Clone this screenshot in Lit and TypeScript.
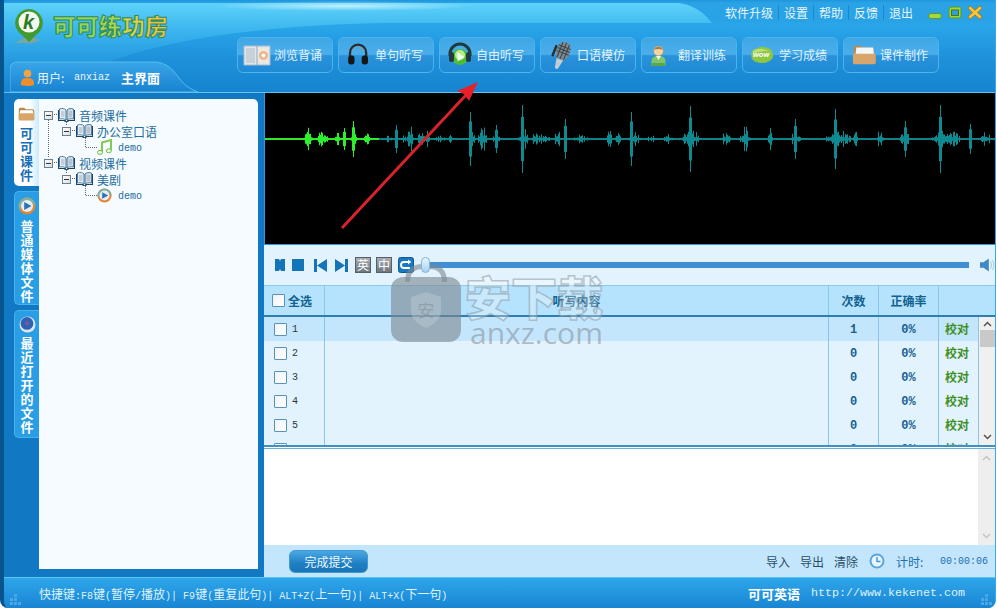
import { LitElement, html, css, svg } from "lit";
import { customElement } from "lit/decorators.js";

function seeded(s: number) {
  return () => {
    s = (s * 16807) % 2147483647;
    return s / 2147483647;
  };
}

// [centre x, amplitude, half width] in page coordinates
const CLUSTERS: number[][] = [
  [308, 14, 4], [321, 9, 4], [326, 6, 3], [337, 12, 2], [344, 11, 1], [353, 18, 1], [354, 8, 4], [367, 6, 4],
  [388, 4, 3], [396, 14, 1], [403, 5, 2], [410, 15, 3], [421, 9, 3], [427, 12, 2], [439, 6, 5], [450, 4, 1],
  [470, 27, 1], [472, 10, 3], [482, 16, 4], [496, 14, 1], [496, 5, 4], [522, 34, 1], [523, 14, 5], [535, 11, 3],
  [544, 8, 5], [557, 14, 2], [565, 20, 1], [580, 5, 7], [609, 23, 2], [618, 7, 3], [631, 27, 1], [634, 9, 6],
  [652, 4, 7], [668, 6, 4], [690, 33, 1], [690, 12, 9], [725, 8, 5], [745, 22, 2], [745, 8, 7], [770, 15, 2],
  [795, 20, 1], [795, 9, 6], [835, 30, 1], [838, 12, 12], [855, 15, 2], [880, 14, 3], [905, 18, 1], [905, 8, 5],
  [940, 34, 1], [945, 14, 14], [970, 15, 1], [985, 10, 4],
];

const BARS = (() => {
  const r = seeded(4711);
  const peak = new Map<number, number>();
  for (const [cx, amp, hw] of CLUSTERS) {
    for (let x = cx - hw; x <= cx + hw; x++) {
      const fall = 1 - (Math.abs(x - cx) / (hw + 1)) * 0.7;
      const q = r();
      const a = amp * fall * (hw <= 1 ? 1 : 0.2 + q * q * 0.8);
      peak.set(x, Math.max(peak.get(x) ?? 0, a));
    }
  }
  return [...peak.entries()];
})();

const ROWS = [
  { n: 1, c: 1 }, { n: 2, c: 0 }, { n: 3, c: 0 }, { n: 4, c: 0 }, { n: 5, c: 0 }, { n: 6, c: 0 },
];

const book = html`<svg class="tico" width="17" height="14" viewBox="0 0 17 14">
  <path d="M0 2h1v10h6.500l1 1.500 1-1.500H16V2h1v11h-6l-1 1H7l-1-1H0z" fill="#1c4468"/>
  <path d="M1.500 1C4 0 6.500 .5 8 2v10C6.500 10.800 4 10.500 1.500 11z" fill="#e6edf2" stroke="#2e6288" stroke-width=".8"/>
  <path d="M15.500 1C13 0 10.500 .5 9 2v10c1.500-1.200 4-1.500 6.500-1z" fill="#cfdbe4" stroke="#2e6288" stroke-width=".8"/>
  <path d="M3 4h3.500M3 6h3.500M3 8h3.500M10.500 4H14M10.500 6H14M10.500 8H14" stroke="#8aa2b6" stroke-width=".8"/>
</svg>`;

const minus = html`<span class="ex"></span>`;

const music = html`<svg class="tico" width="15" height="16" viewBox="0 0 15 16">
  <path d="M5 3.500 14 1v10.500" fill="none" stroke="#86c858" stroke-width="2"/>
  <path d="M5 2.800V13" stroke="#86c858" stroke-width="2"/>
  <ellipse cx="3" cy="13.400" rx="2.600" ry="2" fill="#e9f7dc" stroke="#78bd4a"/>
  <ellipse cx="11.800" cy="11.800" rx="2.600" ry="2" fill="#e9f7dc" stroke="#78bd4a"/>
</svg>`;

const media = (size: number) => html`<svg class="tico" width="${size}" height="${size}" viewBox="0 0 16 16">
  <circle cx="8" cy="8" r="7.500" fill="#e8842c"/>
  <path d="M8 .5A7.500 7.500 0 0 0 1.500 11.700 8 8 0 0 1 15.500 8 7.500 7.500 0 0 0 8 .5z" fill="#7fb0a0"/>
  <circle cx="8" cy="8" r="5.400" fill="#e6eef4"/>
  <path d="M5.500 4.500 12 8 5.500 11.500z" fill="#2c74b8"/>
</svg>`;

const folder = (w: number, h: number) => html`<svg width="${w}" height="${h}" viewBox="0 0 22 18">
  <path d="M1 3q0-2 2-2h5l2 2h9q2 0 2 2v11q0 1-1 1H2q-1 0-1-1z" fill="#b88a52"/>
  <path d="M3 4h16l1 5H2z" fill="#fff"/>
  <path d="M1 8h20v8q0 1-1 1H2q-1 0-1-1z" fill="#d9a468"/>
</svg>`;

const grip = svg`<g fill="#4aa8e4">
  <rect x="4" y="0" width="3" height="3"/><rect x="0" y="4" width="3" height="3"/><rect x="4" y="4" width="3" height="3"/>
  <rect x="0" y="8" width="3" height="3"/><rect x="4" y="8" width="3" height="3"/><rect x="8" y="8" width="3" height="3"/>
</g>`;

const NAV = [
  { t: "浏览背诵", i: svg`<path d="M1 5h26v19H1z" fill="#dfe6ec" stroke="#aebcc8"/><path d="M14 5v19" stroke="#9aa8b4"/><path d="M3 7h9v15H3z" fill="#c8d0d8"/><path d="M16 7h9v15h-9z" fill="#efe9df"/><circle cx="20.500" cy="14.500" r="4.500" fill="#eeb488"/><circle cx="20.500" cy="14.500" r="2" fill="#fff"/>` },
  { t: "单句听写", i: svg`<g transform="translate(1.500 1) scale(.9)"><path d="M5 16v-4a9 9 0 0 1 18 0v4" fill="none" stroke="#2b2b2b" stroke-width="2.500"/><rect x="3" y="15" width="7" height="10" rx="3" fill="#161616"/><rect x="18" y="15" width="7" height="10" rx="3" fill="#161616"/><path d="M7 9q7-6 14 0" fill="none" stroke="#8a97a0" stroke-width="1"/></g>` },
  { t: "自由听写", i: svg`<g transform="translate(1 1)"><path d="M4 14v-2a10 10 0 0 1 20 0v2" fill="none" stroke="#20393a" stroke-width="3"/><circle cx="14" cy="15" r="8" fill="#4dbb34"/><circle cx="14" cy="13" r="5" fill="#b7ec8c"/><path d="M11.500 10.500v9l7-4.500z" fill="#f2fff0"/><rect x="3" y="10" width="5" height="10" rx="2.500" fill="#23393f"/><rect x="20" y="10" width="5" height="10" rx="2.500" fill="#23393f"/></g>` },
  { t: "口语模仿", i: svg`<g transform="rotate(22 14 14) translate(1 0)"><rect x="8" y="0" width="13" height="18" rx="6" fill="#7e8890"/><path d="M8 5h13M8 8h13M8 11h13M11 1v16M14.500 0v18M18 1v16" stroke="#3a4248" stroke-width="1"/><path d="M11 18h7l-2 10h-3z" fill="#c4ccd2"/><rect x="5" y="6" width="2.500" height="12" rx="1" fill="#2a3036"/></g>` },
  { t: "翻译训练", i: svg`<g transform="translate(-2.500 0)"><circle cx="14" cy="10" r="5" fill="#f3d4a6" stroke="#a88858" stroke-width=".6"/><path d="M9 9q5-7 10 0-5-2-10 0z" fill="#a47c4a"/><path d="M7 25v-5q0-5 7-5t7 5v5z" fill="#7fc66e"/><path d="M11.500 15l2.500 4 2.500-4z" fill="#f6f6e8"/><rect x="7" y="22" width="14" height="3" rx="1.500" fill="#58a84a"/></g>` },
  { t: "学习成绩", i: svg`<g transform="translate(1.500 2) scale(.87)"><path d="M2 14q0-7 7-8 4-3 9-1 8 1 9 8 1 7-7 9-6 2-11 0-7-1-7-8z" fill="#8dc63f"/><path d="M4 9q9-5 20 1-10-2-20 2z" fill="#bde07a"/></g>`, wow: true },
  { t: "课件制作", i: svg`<g transform="translate(3 3) scale(.88)"><path d="M2 4q0-2 2-2h6l2 2h11q2 0 2 2v14H2z" fill="#b88a52"/><path d="M5 4h19l1 8H4z" fill="#f4f7f8"/><path d="M1 11h26v10q0 2-2 2H3q-2 0-2-2z" fill="#d8a66c"/></g>` },
];

@customElement("app-root")
export class AppRoot extends LitElement {
  static styles = css`
    :host { display: block; width: 998px; height: 608px; position: relative; overflow: hidden; background: #fff; font-family: "Noto Sans CJK SC", "Liberation Sans", sans-serif; font-size: 12px; }
    * { box-sizing: border-box; }
    .win { width: 996px; height: 608px; display: flex; flex-direction: column; background: #0f78c0; border-left: 4px solid #07558f; border-right: 1px solid #3aa8e4; border-radius: 0 0 8px 8px; overflow: hidden; }

    /* header */
    .header { height: 93px; flex: none; display: flex; position: relative; border-bottom: 1px solid #62c4f0; background: linear-gradient(#1f95dc 0, #2aa3e6 3px, #2aa2e6 22px, #29a6ea 24px, #1e90da 60px, #1684d0 100%); }
    .sheen { position: absolute; left: 0; top: 0; }
    .hleft { width: 233px; flex: none; display: flex; flex-direction: column; justify-content: space-between; position: relative; }
    .logo { display: flex; align-items: flex-start; padding: 8px 0 0 9px; gap: 8px; }
    .pin { position: relative; width: 32px; height: 36px; flex: none; }
    .pin svg { position: absolute; left: 0; top: 0; }
    .pin b { position: absolute; left: 10px; top: 2px; font: italic bold 20px "Liberation Sans", sans-serif; color: #2a7a28; line-height: 24px; }
    .brand { display: flex; font-size: 23px; font-weight: 900; line-height: 30px; margin-top: 2px; letter-spacing: 0; -webkit-text-stroke: 1px #2f8a5a; }
    .brand span:nth-child(1), .brand span:nth-child(2) { color: #8fd65a; }
    .brand span:nth-child(3) { color: #a9d84e; }
    .brand span:nth-child(4) { color: #d8d246; }
    .brand span:nth-child(5) { color: #eec13f; }
    .user { margin-left: 6px; width: 188px; height: 31px; position: relative; display: flex; align-items: center; gap: 3px; padding: 1px 0 0 11px; color: #e8f7ff; }
    .user > svg.bg { position: absolute; left: 0; top: 0; }
    .user > * { position: relative; }
    .user .mono { font-family: "Liberation Mono", monospace; font-size: 10px; }
    .user .main { font-weight: 700; font-size: 13px; color: #fff; margin-left: 8px; }
    .user .lab { font-size: 12px; min-width: 34px; }
    .hright { flex: 1; position: relative; display: flex; flex-direction: column; min-width: 0; }
    .links { display: flex; justify-content: flex-end; align-items: center; height: 24px; padding-right: 13px; color: #e6f6ff; font-size: 12px; }
    .links a { padding: 0 5px; border-left: 1px solid #1c86cc; line-height: 15px; }
    .links a:first-child { border-left: none; }
    .win-btns { display: flex; align-items: center; gap: 6px; margin-left: 10px; }
    .nav { display: flex; gap: 5.500px; margin-top: 13px; }
    .nb { width: 95.500px; height: 36px; border: 1px solid #4cb4ec; border-radius: 6px; display: flex; align-items: center; gap: 3px; padding-left: 5px; color: #e2f4ff; font-size: 12px; background: linear-gradient(#3fa6e6 0, #4aaeea 48%, #2a92da 52%, #1f8ad6 100%); }
    .nb svg { flex: none; }
    .nb .lbl { padding-bottom: 2px; }
    .wowwrap { position: relative; display: flex; }
    .wowwrap i { position: absolute; left: 5px; top: 9px; font: italic bold 7.500px "Liberation Sans", sans-serif; color: #fff; }

    /* main */
    .main-area { flex: 1; display: flex; min-height: 0; }
    .side { width: 260px; flex: none; display: flex; padding: 6px 6px 8px 10px; background: #1179c4; }
    .tabs { width: 25px; flex: none; display: flex; flex-direction: column; gap: 5px; }
    .tab { display: flex; flex-direction: column; align-items: center; color: #fff; font-weight: 700; font-size: 13px; line-height: 14px; border-radius: 5px 0 0 5px; background: #2a9ee4; border: 1px solid #48b2ec; border-right: none; }
    .tab.on { background: linear-gradient(90deg, #fff 60%, #cbeafc); border: none; color: #1a70b4; }
    .tab .ic { flex: none; display: flex; justify-content: center; align-items: center; }
    .tab span { display: block; height: 14px; }
    .t1 { height: 87px; } .t1 .ic { height: 27px; padding-top: 2px; }
    .t2 { height: 114px; } .t2 .ic { height: 27px; }
    .t3 { height: 128px; } .t3 .ic { height: 25px; padding-top: 2px; }
    .panel { flex: 1; background: #f5fbff; border-radius: 0 5px 0 0; padding-top: 8px; position: relative; }
    .lines { position: absolute; left: 0; top: -1px; }
    .tr { height: 16px; display: flex; align-items: center; position: relative; color: #1e6d9c; font-size: 12px; white-space: nowrap; }
    .tr.l0 { padding-left: 5px; } .tr.l1 { padding-left: 23px; } .tr.l2 { padding-left: 58px; }
    .tr em { font-style: normal; margin-left: 4px; }
    .ex { width: 9px; height: 9px; flex: none; border: 1px solid #6c7f8e; background: linear-gradient(135deg, #fff, #d6dee6); position: relative; margin-right: 5px; }
    .ex::after { content: ""; position: absolute; left: 1px; right: 1px; top: 3px; height: 1px; background: #333; }
    .tico { flex: none; }
    .tr .mono { font-family: "Liberation Mono", monospace; font-size: 10px; margin-left: 6px; padding-top: 2px; }

    .right { flex: 1; min-width: 0; display: flex; flex-direction: column; }
    .wave { height: 152px; width: 731px; flex: none; background: #000; display: block; border-left: 1px solid #2a9ae0; border-bottom: 1px solid #2a9ae0; }
    .ctrl { height: 40px; flex: none; background: #e2f3fe; display: flex; align-items: center; padding-left: 10px; position: relative; }
    .ctrl > svg { flex: none; }
    .sq { width: 16px; height: 16px; flex: none; display: flex; align-items: center; justify-content: center; font-size: 12px; line-height: 14px; color: #fff; border: 1px solid #55606a; background: linear-gradient(#a9aeb2, #6e767c); }
    .track { width: 540px; height: 6px; background: #3f8fd2; flex: none; margin-left: -1px; }
    .thumb { width: 9px; height: 16px; flex: none; border-radius: 5px; background: linear-gradient(#eaf6ff, #a6cff0); border: 1px solid #7fb4de; position: relative; z-index: 1; }

    .thead, .tr2 { display: grid; grid-template-columns: 60px 504px 50px 60px 1fr; }
    .thead { height: 32px; flex: none; background: #b5e2fd; border-top: 1px solid #8ccaea; border-bottom: 2px solid #2f7fae; color: #12628f; font-weight: 700; font-size: 12px; }
    .thead > div { display: flex; align-items: center; justify-content: center; border-left: 1px solid #8cc6e6; }
    .thead > div:first-child { border-left: none; justify-content: flex-start; padding-left: 8px; gap: 3px; }
    .cb { width: 13px; height: 13px; flex: none; border: 1px solid #5b93b8; background: linear-gradient(135deg, #f0f4f7, #fff); border-radius: 1px; }
    .tbody { height: 128px; flex: none; display: flex; overflow: hidden; }
    .rows { width: 714px; flex: none; overflow: hidden; }
    .tr2 { height: 24px; grid-template-columns: 60px 504px 50px 60px 40px; background: #e2f3fe; color: #17608f; font-weight: 700; }
    .tr2.sel { background: #c4e6fd; }
    .tr2 > div { display: flex; align-items: center; justify-content: center; border-left: 1px solid #8cc6e6; font-family: "Liberation Mono", monospace; font-size: 12px; padding-top: 1px; }
    .tr2 > div:first-child { border-left: none; justify-content: flex-start; padding: 0 0 0 10px; gap: 5px; font-weight: 400; color: #333; font-size: 10px; }
    .tr2 > .ok { color: #3f8f1f; font-family: "Noto Sans CJK SC", sans-serif; font-size: 12px; justify-content: flex-start; padding: 0 0 2px 6px; }
    .vs { flex: 1; background: #f0f0f0; border-left: 1px solid #8cc6e6; display: flex; flex-direction: column; align-items: center; position: relative; padding-top: 4px; }
    .vs .thumbv { width: 15px; height: 17px; background: #c9c9c9; margin-top: 3px; }
    .vs .grow { flex: 1; }
    .vs svg { flex: none; }
    .sep { height: 4px; flex: none; background: #fff; border-top: 2px solid #3c92c4; border-bottom: 1px solid #6db0d6; }
    .txt { flex: 1; background: #fff; display: flex; justify-content: flex-end; min-height: 0; }
    .txt .vs2 { width: 17px; background: #eeeeee; display: flex; flex-direction: column; justify-content: space-between; align-items: center; padding: 6px 0; }
    .foot { height: 32px; flex: none; background: #c4e6fd; display: flex; align-items: center; padding: 0 7px 0 25px; color: #274f68; font-size: 12px; }
    .go { width: 79px; height: 23px; border-radius: 6px; color: #eef9ff; display: flex; justify-content: center; align-items: center; background: linear-gradient(#4aa8e2, #1f7fc4 60%, #1b74b6); border: 1px solid #3d9ad6; }
    .foot .sp { flex: 1; }
    .foot .a { margin-right: 10px; }
    .foot .tm { color: #1a70b0; margin-left: 11px; min-width: 44px; }
    .foot .tv { font-family: "Liberation Mono", monospace; font-size: 10px; color: #1a70b0; }

    .status { height: 31px; flex: none; position: relative; border-top: 1px solid #5fc4f2; background: linear-gradient(#2ea6ea, #1985d4); display: flex; align-items: center; color: #dff3ff; padding: 0 30px 0 35px; font-size: 12px; white-space: nowrap; }
    .status .m { font-family: "Liberation Mono", monospace; font-size: 10px; white-space: pre; }
    .status .sp { flex: 1; }
    .status b { color: #fff; font-size: 13px; }
    .status .url { font-family: "Liberation Mono", monospace; font-size: 11.670px; margin-left: 11px; }
    .grip { position: absolute; bottom: 3px; }
    .grip.l { left: 6px; }
    .grip.r { right: 3px; }

    /* overlays */
    .arrow { position: absolute; left: 0; top: 0; pointer-events: none; }
    .wm { position: absolute; left: 391px; top: 262px; display: flex; gap: 4px; pointer-events: none; }
    .wm .words { display: flex; flex-direction: column; }
    .wm .cn { font-size: 46px; line-height: 50px; font-weight: 900; color: rgba(255,255,255,.3); -webkit-text-stroke: 1.500px rgba(135,145,155,.5); margin-top: 8px; }
    .wm .en { font: 30px/26px "Open Sans", "Liberation Sans", sans-serif; color: rgba(130,140,150,.55); margin: 0 0 0 5px; }
  `;

  render() {
    return html`
      <div class="win">
        <div class="header">
          <svg class="sheen" width="720" height="92" viewBox="0 0 720 92">
            <defs>
              <linearGradient id="sh" x1="0" y1="0" x2="0" y2="1"><stop offset="0" stop-color="#5ed2fa"/><stop offset=".3" stop-color="#3bb6ee"/><stop offset="1" stop-color="#1f92dc" stop-opacity="0"/></linearGradient>
              <radialGradient id="hl"><stop offset="0" stop-color="#c8f2ff" stop-opacity=".9"/><stop offset="1" stop-color="#c8f2ff" stop-opacity="0"/></radialGradient>
            </defs>
            <path d="M0 3H674Q694 5 708 23H380Q200 27 110 60L0 92Z" fill="url(#sh)"/>
            <ellipse cx="340" cy="6" rx="130" ry="5" fill="url(#hl)"/>
          </svg>
          <div class="hleft">
            <div class="logo">
              <div class="pin">
                <svg width="32" height="36" viewBox="0 0 32 36">
                  <path d="M1 35q10 0 14-0l1 1 1-1q6 0 10-3l-11-4z" fill="#7ea6a0"/>
                  <path d="M16 1a14 14 0 0 0-7 26l7 7 7-7a14 14 0 0 0-7-26z" fill="#3f9b2e"/>
                  <circle cx="16" cy="14" r="10.500" fill="#f5f8ef"/>
                </svg>
                <b>k</b>
              </div>
              <div class="brand"><span>可</span><span>可</span><span>练</span><span>功</span><span>房</span></div>
            </div>
            <div class="user">
              <svg class="bg" width="188" height="31" viewBox="0 0 188 31">
                <defs><linearGradient id="ug" x1="0" y1="0" x2="0" y2="1"><stop offset="0" stop-color="#3aa6e8"/><stop offset="1" stop-color="#1882d0"/></linearGradient></defs>
                <path d="M0 31V8Q0 1 8 1H146Q158 2 166 13 175 27 188 31Z" fill="url(#ug)" stroke="#53bdf0"/>
              </svg>
              <svg width="13" height="17" viewBox="0 0 13 17"><circle cx="6.500" cy="4.500" r="3.800" fill="#f5a33c"/><path d="M0 16v-2q0-5 6.500-5T13 14v2q-6.500 2-13 0z" fill="#ee8f2a"/></svg>
              <span class="lab">用户:</span><span class="mono">anxiaz</span><span class="main">主界面</span>
            </div>
          </div>
          <div class="hright">
            <div class="links">
              <a>软件升级</a><a>设置</a><a>帮助</a><a>反馈</a><a>退出</a>
              <div class="win-btns">
                <svg width="14" height="8" viewBox="0 0 14 8" style="margin-top:7px"><rect x=".5" y="1.500" width="13" height="5" rx="2.500" fill="#a4d83c" stroke="#5a9a28"/></svg>
                <svg width="14" height="13" viewBox="0 0 14 13"><rect x="1" y="1" width="12" height="11" rx="2" fill="#9ad83a" stroke="#5a9a28"/><rect x="3.500" y="4" width="7" height="5.500" fill="#3c9ad6" stroke="#3d7a22"/></svg>
                <svg width="14" height="13" viewBox="0 0 14 13"><path d="M2 2l10 9M12 2 2 11" stroke="#a87a18" stroke-width="4" stroke-linecap="round"/><path d="M2 2l10 9M12 2 2 11" stroke="#f6c63e" stroke-width="2.500" stroke-linecap="round"/></svg>
              </div>
            </div>
            <div class="nav">
              ${NAV.map((n) => html`<div class="nb">
                <span class="wowwrap"><svg width="28" height="28" viewBox="0 0 28 28">${n.i}</svg>${(n as any).wow ? html`<i>wow</i>` : ""}</span>
                <span class="lbl">${n.t}</span>
              </div>`)}
            </div>
          </div>
        </div>
        <div class="main-area">
          <div class="side">
            <div class="tabs">
              <div class="tab on t1"><div class="ic">${folder(17, 14)}</div>${[..."可可课件"].map((c) => html`<span>${c}</span>`)}</div>
              <div class="tab t2"><div class="ic">${media(18)}</div>${[..."普通媒体文件"].map((c) => html`<span>${c}</span>`)}</div>
              <div class="tab t3"><div class="ic"><svg width="17" height="17" viewBox="0 0 16 16"><circle cx="8" cy="8" r="7.500" fill="#dfe6ee"/><circle cx="7.500" cy="7" r="6" fill="#2f62b4"/><circle cx="7.500" cy="7" r="2" fill="#7a5a9a"/></svg></div>${[..."最近打开的文件"].map((c) => html`<span>${c}</span>`)}</div>
            </div>
            <div class="panel">
              <svg class="lines" width="100" height="110" viewBox="0 0 100 110">
                <g stroke="#666" stroke-width="1" stroke-dasharray="1 1" fill="none">
                  <path d="M9.500 22V60M15 16.500h4M15 64.500h4M27.500 24V27M33 32.500h4M27.500 72V75M33 80.500h4M46.500 40V49.500H58M46.500 88V97.500H58"/>
                </g>
              </svg>
              <div class="tr l0">${minus}${book}<em>音频课件</em></div>
              <div class="tr l1">${minus}${book}<em>办公室口语</em></div>
              <div class="tr l2">${music}<span class="mono">demo</span></div>
              <div class="tr l0">${minus}${book}<em>视频课件</em></div>
              <div class="tr l1">${minus}${book}<em>美剧</em></div>
              <div class="tr l2">${media(15)}<span class="mono">demo</span></div>
            </div>
          </div>
          <div class="right">
            <svg class="wave" viewBox="265 93 730 151">
              <rect x="265" y="138" width="114" height="2" fill="#2ee82e"/>
              <rect x="379" y="138" width="616" height="2" fill="#0f8288"/>
              ${BARS.map(([x, a]) => svg`<rect x="${x}" y="${139 - a}" width="1" height="${a * 2}" fill="${x < 379 ? "#2cf02c" : "#0f8a90"}"/>`)}
            </svg>
            <div class="ctrl">
              <svg width="13" height="14" viewBox="0 0 13 14"><path d="M1 1h4l1 2 1-2h4v12H7L6 11l-1 2H1z" fill="#1474b8"/></svg>
              <svg width="12" height="12" viewBox="0 0 12 12" style="margin-left:5px"><rect width="12" height="12" fill="#1474b8"/></svg>
              <svg width="13" height="13" viewBox="0 0 13 13" style="margin-left:10px"><path d="M0 0h3v13H0zM13 0v13L3 6.500z" fill="#1474b8"/></svg>
              <svg width="13" height="13" viewBox="0 0 13 13" style="margin-left:8px"><path d="M13 0h-3v13h3zM0 0v13L10 6.500z" fill="#1474b8"/></svg>
              <div class="sq" style="margin-left:7px">英</div>
              <div class="sq" style="margin-left:5px">中</div>
              <svg width="16" height="16" viewBox="0 0 16 16" style="margin-left:6px"><rect x=".5" y=".5" width="15" height="15" rx="2" fill="#1a78c0" stroke="#0e5a96"/><path d="M12.500 5H6Q3 5 3 8t3 3h6" fill="none" stroke="#fff" stroke-width="1.800"/><path d="M10 2.500 13 5l-3 2.500z" fill="#fff"/></svg>
              <div class="thumb" style="margin-left:7px"></div>
              <div class="track"></div>
              <svg width="15" height="16" viewBox="0 0 17 16" style="margin-left:11px"><path d="M0 5h4l6-4.500v15L4 11H0z" fill="#3f8ac6"/><path d="M12 4q2.500 4 0 8M14 2.500q3.500 5.500 0 11" fill="none" stroke="#a8c4dc"/></svg>
            </div>
            <div class="thead">
              <div><span class="cb"></span>全选</div>
              <div>听写内容</div>
              <div>次数</div>
              <div>正确率</div>
              <div></div>
            </div>
            <div class="tbody">
              <div class="rows">
                ${ROWS.map((r) => html`<div class="tr2 ${r.n === 1 ? "sel" : ""}">
                  <div><span class="cb"></span>${r.n}</div>
                  <div></div>
                  <div>${r.c}</div>
                  <div>0%</div>
                  <div class="ok">校对</div>
                </div>`)}
              </div>
              <div class="vs">
                <svg width="9" height="6" viewBox="0 0 9 6"><path d="M1 5l3.500-3.500L8 5" fill="none" stroke="#555" stroke-width="1.500"/></svg>
                <div class="thumbv"></div>
                <div class="grow"></div>
                <svg width="9" height="6" viewBox="0 0 9 6" style="margin-bottom:5px"><path d="M1 1l3.500 3.500L8 1" fill="none" stroke="#555" stroke-width="1.500"/></svg>
              </div>
            </div>
            <div class="sep"></div>
            <div class="txt"><div class="vs2">
              <svg width="9" height="6" viewBox="0 0 9 6"><path d="M1 5l3.500-3.500L8 5" fill="none" stroke="#c4c4c4" stroke-width="1.500"/></svg>
              <svg width="9" height="6" viewBox="0 0 9 6"><path d="M1 1l3.500 3.500L8 1" fill="none" stroke="#c4c4c4" stroke-width="1.500"/></svg>
            </div></div>
            <div class="foot">
              <div class="go">完成提交</div>
              <div class="sp"></div>
              <span class="a">导入</span><span class="a">导出</span><span class="a" style="margin-right:11px">清除</span>
              <svg width="16" height="16" viewBox="0 0 16 16"><circle cx="8" cy="8" r="6.500" fill="#eaf6ff" stroke="#5aa6dc" stroke-width="2"/><path d="M8 4v4.500h3.500" fill="none" stroke="#4a96d0" stroke-width="1.500"/></svg>
              <span class="tm">计时:</span><span class="tv">00:00:06</span>
            </div>
          </div>
        </div>
        <div class="status">
          <svg class="grip l" width="11" height="11" viewBox="0 0 11 11">${grip}</svg>
          <span>快捷键<span class="m">:F8</span>键<span class="m">(</span>暂停<span class="m">/</span>播放<span class="m">)| F9</span>键<span class="m">(</span>重复此句<span class="m">)| ALT+Z(</span>上一句<span class="m">)| ALT+X(</span>下一句<span class="m">)</span></span>
          <span class="sp"></span>
          <b>可可英语</b><span class="url">http://www.kekenet.com</span>
          <svg class="grip r" width="11" height="11" viewBox="0 0 11 11">${grip}</svg>
        </div>
      </div>

      <div class="wm">
        <svg width="70" height="80" viewBox="0 0 70 80">
          <path d="M14 20Q14 2 32 2h6q18 0 18 18h-5q0-13-13-13h-6q-13 0-13 13z" fill="rgba(125,135,145,.6)"/>
          <rect x="0" y="15" width="70" height="65" rx="12" fill="rgba(125,135,145,.62)"/>
          <path d="M35 30l15 5v14q0 10-15 17-15-7-15-17V35z" fill="rgba(215,225,232,.28)"/>
          <text x="35" y="55" text-anchor="middle" font-size="17" fill="rgba(125,135,145,.5)">安</text>
        </svg>
        <div class="words"><div class="cn">安下载</div><div class="en">anxz.com</div></div>
      </div>

      <svg class="arrow" width="998" height="608" viewBox="0 0 998 608">
        <path d="M342 228 466 95" stroke="#d8232a" stroke-width="3" fill="none"/>
        <path d="M478 82 469 101 464 94 457 91z" fill="#e8202a"/>
      </svg>
    `;
  }
}
